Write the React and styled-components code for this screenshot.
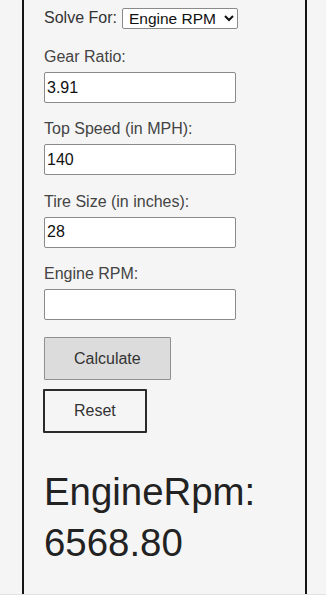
import React, { useState } from 'react'
import styled, { createGlobalStyle } from 'styled-components'

const Global = createGlobalStyle`
body{
  margin:0;
  background:#fff;
  font-family:"Liberation Sans", Arial, sans-serif;
}
`

function App() {
  const [gear, setGear] = useState('3.91')
  const [speed, setSpeed] = useState('140')
  const [tire, setTire] = useState('28')
  const [rpm, setRpm] = useState('')
  const [result, setResult] = useState('6568.80')

  const calc = () => {
    const r = (parseFloat(speed) * parseFloat(gear) * 336) / parseFloat(tire)
    setResult(isNaN(r) ? '' : r.toFixed(2))
  }

  const reset = () => {
    setGear('')
    setSpeed('')
    setTire('')
    setRpm('')
    setResult('')
  }

  return (
    <Page>
      <Global />
      <Column>
        <SolveRow>
          <span>Solve For:</span>
          <Select defaultValue="rpm">
            <option value="rpm">Engine RPM</option>
            <option value="gear">Gear Ratio</option>
            <option value="speed">Top Speed</option>
            <option value="tire">Tire Size</option>
          </Select>
        </SolveRow>

        <Field>
          <Label>Gear Ratio:</Label>
          <Input value={gear} onChange={e => setGear(e.target.value)} />
        </Field>
        <Field>
          <Label>Top Speed (in MPH):</Label>
          <Input value={speed} onChange={e => setSpeed(e.target.value)} />
        </Field>
        <Field>
          <Label>Tire Size (in inches):</Label>
          <Input value={tire} onChange={e => setTire(e.target.value)} />
        </Field>
        <Field>
          <Label>Engine RPM:</Label>
          <Input value={rpm} onChange={e => setRpm(e.target.value)} />
        </Field>

        <Buttons>
          <Button onClick={calc}>Calculate</Button>
          <Button outline onClick={reset}>Reset</Button>
        </Buttons>

        <Result>EngineRpm: {result}</Result>
      </Column>
    </Page>
  )
}

const Page = styled.div`
width:326px;
height:595px;
box-sizing:border-box;
background:#f5f5f5;
border-bottom:1px solid #e2e2e2;
padding-left:22px;
overflow:hidden;
`
const Column = styled.div`
width:285px;
height:100%;
box-sizing:border-box;
border-left:2px solid #151515;
border-right:2px solid #151515;
padding:8px 20px 0 20px;
display:flex;
flex-direction:column;
color:#333;
`
const SolveRow = styled.div`
display:flex;
align-items:center;
gap:5px;
font-size:16px;
height:20px;
`
const Select = styled.select`
width:116px;
height:21px;
font-family:"Liberation Sans", Arial, sans-serif;
font-size:15.5px;
color:#111;
background:#fff;
border:1px solid #8a8a8a;
border-radius:2px;
padding:0 2px;
`
const Field = styled.div`
display:flex;
flex-direction:column;
gap:6px;
margin-top:20px;
& + & {
  margin-top:17.4px;
}
`
const Label = styled.label`
font-size:16px;
line-height:18px;
color:#444;
`
const Input = styled.input`
width:192px;
height:31px;
box-sizing:border-box;
border:1px solid #8a8a8a;
border-radius:2px;
background:#fff;
padding:0 2px;
font-family:"Liberation Sans", Arial, sans-serif;
font-size:16px;
color:#111;
`
const Buttons = styled.div`
display:flex;
flex-direction:column;
align-items:flex-start;
gap:9px;
margin-top:17px;
`
const Button = styled.button`
font-family:"Liberation Sans", Arial, sans-serif;
font-size:16px;
color:#333;
height:${p => (p.outline ? '44px' : '43px')};
padding:0 29px;
background:${p => (p.outline ? 'transparent' : '#dcdcdc')};
border:${p => (p.outline ? '2px solid #2b2b2b' : '1px solid #8f8f8f')};
border-radius:1px;
margin-left:${p => (p.outline ? '-1px' : '0')};
cursor:pointer;
`
const Result = styled.div`
margin-top:33px;
font-size:38.4px;
line-height:51px;
color:#222;
`

export default App
